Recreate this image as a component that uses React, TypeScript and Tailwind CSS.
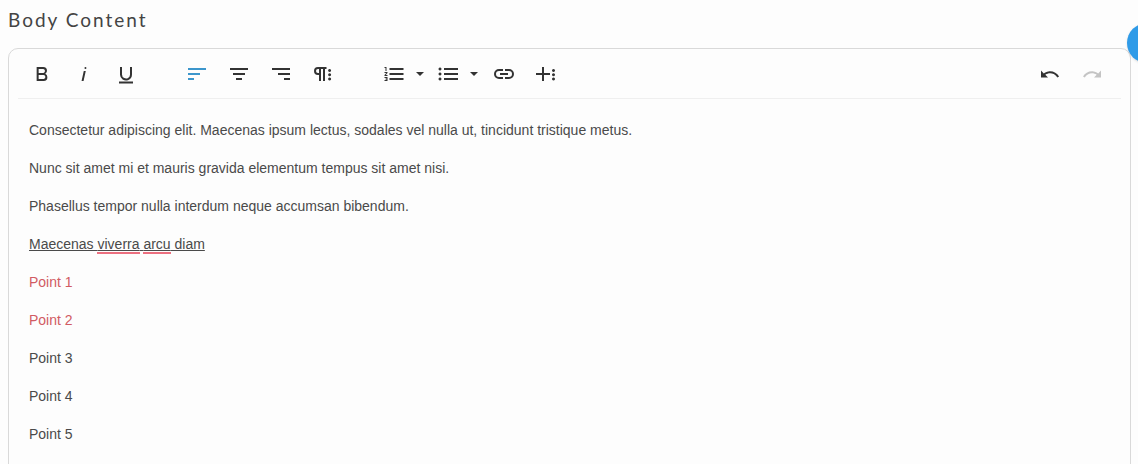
import React, { useState } from 'react';

type Align = 'left' | 'center' | 'right';

const ICONS = {
    bold: 'M15.25,11.8h0A3.68,3.68,0,0,0,17,9a3.93,3.93,0,0,0-3.86-4H6.65V19h7a3.74,3.74,0,0,0,3.7-3.78V15.1A3.64,3.64,0,0,0,15.25,11.8ZM8.65,7h4.2a2.09,2.09,0,0,1,2,1.3,2.09,2.09,0,0,1-1.37,2.61,2.23,2.23,0,0,1-.63.09H8.65Zm4.6,10H8.65V13h4.6a2.09,2.09,0,0,1,2,1.3,2.09,2.09,0,0,1-1.37,2.61A2.23,2.23,0,0,1,13.25,17Z',
    italic: 'M11.76,9h2l-2.2,10h-2Zm1.68-4a1,1,0,1,0,1,1,1,1,0,0,0-1-1Z',
    underline: 'M19,19.5v2H5V19.5Zm-3-6.785a4,4,0,0,1-5.74,3.4A3.75,3.75,0,0,1,8,12.585V5H6v7.715a6,6,0,0,0,8,5.44,6,6,0,0,0,4-5.65V5H16Z',
    left: 'M2,6h18v2H2ZM2,11h12v2H2ZM2,16h6v2H2Z',
    center: 'M2,6h18v2H2ZM5,11h12v2H5ZM8,16h6v2H8Z',
    right: 'M2,6h18v2H2ZM8,11h12v2H8ZM14,16h6v2H14Z',
    paragraph: 'M6,5h8.5v2H13v12h-2V7H9v12H7v-6H6a4,4,0,0,1,0-8ZM6,7a2,2,0,0,0,0,4h1V7ZM17.6,7a1.5,1.5,0,1,0,.01,0ZM17.6,11.2a1.5,1.5,0,1,0,.01,0ZM17.6,15.5a1.5,1.5,0,1,0,.01,0Z',
    ol: 'M3.5,16h2v.5h-1v1h1V18h-2v1h3V15h-3Zm1-7h1V5h-2V6h1Zm-1,2H5.3L3.5,13.1V14h3V13H4.7l1.8-2.1V10h-3Zm5-5V8h14V6Zm0,12h14V16H8.5Zm0-5h14V11H8.5Z',
    ul: 'M5,5.5a1.5,1.5,0,1,0,.01,0ZM5,10.5a1.5,1.5,0,1,0,.01,0ZM5,15.5a1.5,1.5,0,1,0,.01,0ZM9,6h14v2H9ZM9,11h14v2H9ZM9,16h14v2H9Z',
    link: 'M11,17H7A5,5,0,0,1,7,7h4V9H7a3,3,0,0,0,0,6h4ZM17,7H13V9h4a3,3,0,0,1,0,6H13v2h4A5,5,0,0,0,17,7Zm-1,4H8v2h8Z',
    more: 'M8,5h2v6h6v2h-6v6H8v-6H2v-2h6ZM19.5,7a1.5,1.5,0,1,0,.01,0ZM19.5,11.2a1.5,1.5,0,1,0,.01,0ZM19.5,15.5a1.5,1.5,0,1,0,.01,0Z',
    undo: 'M10.4,9.4c-1.7,0.3-3.2,0.9-4.6,2L3,8.5v7h7l-2.7-2.7c3.7-2.6,8.8-1.8,11.5,1.9c0.2,0.3,0.4,0.5,0.5,0.8l1.8-0.9C18.9,10.8,14.7,8.7,10.4,9.4z',
    redo: 'M13.6,9.4c1.7,0.3,3.2,0.9,4.6,2L21,8.5v7h-7l2.7-2.7C13,10.1,7.9,11,5.3,14.7c-0.2,0.3-0.4,0.5-0.5,0.8L3,14.6C5.1,10.8,9.3,8.7,13.6,9.4z',
};

interface ToolButtonProps {
    icon: keyof typeof ICONS;
    label: string;
    active?: boolean;
    disabled?: boolean;
    narrow?: boolean;
    onClick?: () => void;
}

function ToolButton({ icon, label, active, disabled, narrow, onClick }: ToolButtonProps) {
    const width = narrow ? 'w-9' : 'w-[42px]';
    const color = active ? 'text-[#3c96cc]' : disabled ? 'text-[#c4c4c4]' : 'text-[#333333]';

    return (
        <button
            type="button"
            aria-label={label}
            disabled={disabled}
            onClick={onClick}
            className={`flex h-10 items-center justify-center ${width} ${color}`}
        >
            <svg viewBox="0 0 24 24" className="size-6 shrink-0 fill-current">
                <path d={ICONS[icon]} />
            </svg>
        </button>
    );
}

function MenuArrow({ label }: { label: string }) {
    return (
        <button type="button" aria-label={label} className="flex h-10 w-[18px] items-center justify-center text-[#333333]">
            <svg viewBox="0 0 8 4" className="h-1 w-2 fill-current">
                <path d="M0,0h8L4,4Z" />
            </svg>
        </button>
    );
}

const points = [
    { text: 'Point 1', marked: true },
    { text: 'Point 2', marked: true },
    { text: 'Point 3', marked: false },
    { text: 'Point 4', marked: false },
    { text: 'Point 5', marked: false },
];

export default function App() {
    const [align, setAlign] = useState<Align>('left');

    return (
        <main className="relative h-screen overflow-hidden bg-[#fdfdfd] pt-[6px] pr-[7px] pl-2">
            <h1 id="body-content" className="[font-family:Lato,sans-serif] text-[19px] leading-7 tracking-[2px] text-[#444]">
                Body Content
            </h1>

            <section className="mt-[14px] rounded-[10px] border border-[#d9d9d9]">
                <div role="toolbar" aria-label="Formatting" className="mx-[9px] flex h-[50px] items-center justify-between border-b border-[#efefef] pr-2 pl-[3px]">
                    <div className="flex gap-[30px]">
                        <div className="flex">
                            <ToolButton icon="bold" label="Bold" />
                            <ToolButton icon="italic" label="Italic" />
                            <ToolButton icon="underline" label="Underline" />
                        </div>
                        <div className="flex">
                            <ToolButton icon="left" label="Align left" active={align === 'left'} onClick={() => setAlign('left')} />
                            <ToolButton icon="center" label="Align center" active={align === 'center'} onClick={() => setAlign('center')} />
                            <ToolButton icon="right" label="Align right" active={align === 'right'} onClick={() => setAlign('right')} />
                            <ToolButton icon="paragraph" label="More paragraph" />
                        </div>
                        <div className="flex">
                            <ToolButton icon="ol" label="Ordered list" narrow />
                            <MenuArrow label="Ordered list styles" />
                            <ToolButton icon="ul" label="Unordered list" narrow />
                            <MenuArrow label="Unordered list styles" />
                            <ToolButton icon="link" label="Insert link" />
                            <ToolButton icon="more" label="More rich" />
                        </div>
                    </div>
                    <div className="flex">
                        <ToolButton icon="undo" label="Undo" />
                        <ToolButton icon="redo" label="Redo" disabled />
                    </div>
                </div>

                <div
                    role="textbox"
                    aria-multiline="true"
                    aria-labelledby="body-content"
                    contentEditable
                    suppressContentEditableWarning
                    spellCheck={false}
                    className="flex flex-col gap-[18px] px-5 pt-[21px] pb-16 font-['Liberation_Sans',Arial,sans-serif] text-[14px] leading-5 text-[#4a4a4a] outline-none"
                >
                    <p>Consectetur adipiscing elit. Maecenas ipsum lectus, sodales vel nulla ut, tincidunt tristique metus.</p>
                    <p>Nunc sit amet mi et mauris gravida elementum tempus sit amet nisi.</p>
                    <p>Phasellus tempor nulla interdum neque accumsan bibendum.</p>
                    <p className="underline">
                        Maecenas <span className="border-b-2 border-[#ec7080]">viverra</span>{' '}
                        <span className="border-b-2 border-[#ec7080]">arcu</span> diam
                    </p>
                    {points.map(point => (
                        <p key={point.text} className={point.marked ? 'text-[#d15b63]' : ''}>
                            {point.text}
                        </p>
                    ))}
                </div>
            </section>

            <button type="button" aria-label="Help" className="absolute top-[23px] -right-[29px] size-10 rounded-full bg-[#2f9be8] shadow" />
        </main>
    );
}
